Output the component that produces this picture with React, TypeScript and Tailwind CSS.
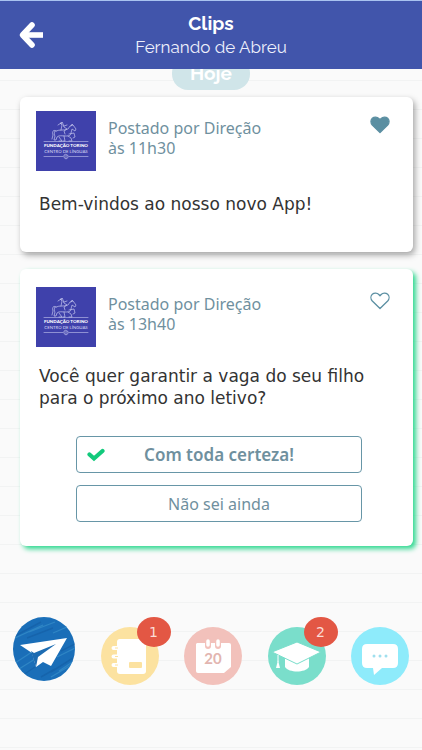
interface PostHeaderProps {
  author: string;
  time: string;
  liked: boolean;
}

interface NavItem {
  label: string;
  badge?: number;
  active?: boolean;
  icon: React.ReactNode;
}

function ArrowIcon() {
  return (
    <svg viewBox="0 0 26 28" className="h-7 w-[26px]" fill="none" stroke="currentColor" strokeWidth="5.6" aria-hidden="true">
      <path d="M14 4L4.500 14 14 24" strokeLinecap="round" strokeLinejoin="round" />
      <path d="M5 14h20" />
    </svg>
  );
}

function CheckIcon() {
  return (
    <svg viewBox="0 0 18 14" className="absolute left-[10px] top-[11px] h-[14px] w-[18px]" fill="none" stroke="#12ca7c" strokeWidth="4.200" aria-hidden="true">
      <path d="M2.500 6.500L7 10.500 15.500 3" strokeLinecap="round" strokeLinejoin="miter" />
    </svg>
  );
}

function HeartIcon({ filled }: { filled: boolean }) {
  return (
    <svg viewBox="0 0 20 18" className="h-[18px] w-5" fill={filled ? 'currentColor' : 'none'} stroke="currentColor" strokeWidth="1.300" strokeLinejoin="round" aria-hidden="true">
      <path d="M10 16.500L2.300 9C0.500 7 0.500 4 2.300 2.300 4.200 0.700 7.200 0.800 8.800 2.500L10 3.800 11.200 2.500C12.800 0.800 15.800 0.700 17.700 2.300 19.500 4 19.500 7 17.700 9z" />
    </svg>
  );
}

function SchoolLogo() {
  return (
    <svg viewBox="0 0 60 60" className="h-[60px] w-[60px] shrink-0" role="img" aria-label="Fundação Torino">
      <rect width="60" height="60" fill="#3f41ab" />
      <g fill="none" stroke="#c4c6ee" strokeWidth="0.7" strokeLinecap="round" strokeLinejoin="round">
        <path d="M20 20c-3-2-4 1-3 4l-1 4M20 20c4-2 8 0 12-2l2-3 3-1 3 4-1 2-3-2-1 4c0 3-3 3-5 3-4 0-7-1-9 1l-1 3h-2l1-4c-1-1-1-3 0-5" />
        <path d="M33 23l5-1 1 4-2 1M32 25l3 2 1 3h-3M28 25l1 5h-2M23 26l3 4h-3" />
        <path d="M25 19l1-5-2-2 3 1 1 3 3 2-3 2 1 3M25 12l1-1 1 1M22 14l3-2M28 15l3-1M35 15l1-2 1 1" />
        <path d="M8 30.500h44M8 45.500h19M33 45.500h19" strokeWidth="0.6" />
        <path d="M30 43.500l2 1v2l-2 1.500-2-1.500v-2zM30 44.500v2" />
      </g>
      <text x="30" y="36" textAnchor="middle" fontFamily="Lato, sans-serif" fontSize="4.500" fontWeight="900" fill="#ffffff">
        FUNDAÇÃO TORINO
      </text>
      <text x="30" y="42" textAnchor="middle" fontFamily="Lato, sans-serif" fontSize="4.300" fill="#dcdcf6">
        CENTRO DE LÍNGUAS
      </text>
    </svg>
  );
}

function PostHeader({ author, time, liked }: PostHeaderProps) {
  return (
    <div className="flex items-start">
      <SchoolLogo />
      <p className="ml-3 mt-[7px] flex-1 font-['Trebuchet_MS','Noto_Sans',sans-serif] text-[16px] leading-5 text-[#6f909e]">
        Postado por {author}
        <br />
        às {time}
      </p>
      <button aria-label="Curtir" aria-pressed={liked} className="mr-[7px] mt-[5px] text-[#5b8fa2]">
        <HeartIcon filled={liked} />
      </button>
    </div>
  );
}

const NAV_ITEMS: NavItem[] = [
  {
    label: 'Clips',
    active: true,
    icon: (
      <svg viewBox="0 0 62 64" className="h-16 w-[62px]">
        <defs>
          <clipPath id="clips-circle">
            <ellipse cx="31" cy="32" rx="31" ry="32" />
          </clipPath>
        </defs>
        <g clipPath="url(#clips-circle)">
          <rect width="62" height="64" fill="#1b70b9" />
          <g stroke="#4ba0d3" strokeWidth="1.200" opacity="0.45">
            <path d="M0 22L30 8M16 15l26-10M2 46l20-13M6 52l16-10M38 60l22-13M40 16l14-6M46 54l15-10M44 40l18-9" />
          </g>
          <g stroke="#125a9f" strokeWidth="1.500" opacity="0.5">
            <path d="M2 19L28 5M14 21l26-10M38 55l22-14M10 58l12-8M28 60l14-8M48 34l14-7" />
          </g>
        </g>
        <path d="M7 28L54 21 38 49 30 45 23 50 19 36z" fill="#fff" />
        <path d="M18 34l3 2 22-9-18 13-2 10z" fill="#1d6cb2" />
      </svg>
    ),
  },
  {
    label: 'Agenda',
    badge: 1,
    icon: (
      <svg viewBox="0 0 58 58" className="h-[58px] w-[58px]">
        <circle cx="29" cy="29" r="29" fill="#fce2a0" />
        <rect x="16" y="12" width="29" height="35" rx="3" fill="#fff" />
        <path d="M12.500 21h7M12.500 29.500h7M12.500 38h7" stroke="#fff" strokeWidth="4" strokeLinecap="round" />
        <path d="M14 21h3M14 29.500h3M14 38h3" stroke="#fce2a0" strokeWidth="1" />
        <rect x="28" y="35" width="13" height="6" rx="1" fill="#fce2a0" />
      </svg>
    ),
  },
  {
    label: 'Calendário',
    icon: (
      <svg viewBox="0 0 58 58" className="h-[58px] w-[58px]">
        <circle cx="29" cy="29" r="29" fill="#f2c1bb" />
        <path d="M13 16h32q2 0 2 2v22l-7 6H14q-2 0-2-2V17z" fill="#fff" />
        <path d="M24 14v5M34 14v5" stroke="#f2c1bb" strokeWidth="6" strokeLinecap="round" />
        <path d="M24 14v4M34 14v4" stroke="#fff" strokeWidth="3.500" strokeLinecap="round" />
        <text x="29" y="37" textAnchor="middle" fontFamily="Lato, sans-serif" fontSize="15" fontWeight="700" fill="#e2b5b0">
          20
        </text>
      </svg>
    ),
  },
  {
    label: 'Notas',
    badge: 2,
    icon: (
      <svg viewBox="0 0 58 58" className="h-[58px] w-[58px]">
        <circle cx="29" cy="29" r="29" fill="#7adecb" />
        <path d="M17 30v10c4 6 20 6 24 0V30z" fill="#fff" />
        <path d="M4 25l25-10 24 10-24 12z" fill="#fff" stroke="#7adecb" strokeWidth="1" />
        <path d="M10 28v7" stroke="#fff" strokeWidth="1" />
        <path d="M10 33l2 8H8z" fill="#fff" />
      </svg>
    ),
  },
  {
    label: 'Mensagens',
    icon: (
      <svg viewBox="0 0 58 58" className="h-[58px] w-[58px]">
        <circle cx="29" cy="29" r="29" fill="#8eebfb" />
        <path d="M16 17h26q5 0 5 5v14q0 5-5 5H31l-8 7-1-7h-6q-5 0-5-5V22q0-5 5-5z" fill="#fff" />
        <g fill="#9fdfee">
          <circle cx="23" cy="29" r="1.500" />
          <circle cx="29" cy="29" r="1.500" />
          <circle cx="35" cy="29" r="1.500" />
        </g>
      </svg>
    ),
  },
];

export default function App() {
  return (
    <div className="flex min-h-screen flex-col bg-[#fafafa] bg-[repeating-linear-gradient(to_bottom,transparent_0px,transparent_22px,#f2f3f3_22px,#f2f3f3_23px,transparent_23px,transparent_29px)] font-['Verdana','DejaVu_Sans',sans-serif]">
      <header className="z-10 grid h-[69px] grid-cols-[64px_1fr_64px] items-center border-t border-[#a9c3f0] bg-[#4155ab] text-white">
        <button aria-label="Voltar" className="ml-[18px] w-fit">
          <ArrowIcon />
        </button>
        <div className="text-center font-['Raleway','Lato',sans-serif]">
          <h1 className="text-[19px] font-bold leading-6">Clips</h1>
          <p className="text-[17px] leading-6 text-[#eef0fb]">Fernando de Abreu</p>
        </div>
      </header>

      <main className="flex flex-1 flex-col pl-5 pr-[9px]">
        <div className="-mt-3 ml-[152px] flex h-[33px] w-[78px] items-center justify-center rounded-2xl bg-[#d0e5e9] font-['Raleway','Lato',sans-serif] text-[19px] font-bold text-white">
          Hoje
        </div>

        <article className="mt-[7px] rounded-md bg-white px-4 pb-[37px] pt-[14px] shadow-[2px_3px_6px_rgba(0,0,0,0.35)]">
          <PostHeader author="Direção" time="11h30" liked />
          <p className="ml-[3px] mt-[22px] text-[17px] leading-[22px] text-[#333]">Bem-vindos ao nosso novo App!</p>
        </article>

        <article className="mt-[17px] rounded-md bg-white px-4 pb-6 pt-[18px] shadow-[3px_3px_5px_#2fd890]">
          <PostHeader author="Direção" time="13h40" liked={false} />
          <p className="ml-[3px] mt-[18px] text-[17px] leading-[22px] text-[#333]">
            Você quer garantir a vaga do seu filho para o próximo ano letivo?
          </p>
          <div className="ml-10 mr-[35px] mt-[27px] flex flex-col gap-3 font-['Trebuchet_MS','Noto_Sans',sans-serif] text-[16px] text-[#6f909e]">
            <button aria-pressed="true" className="relative h-[37px] rounded border border-[#6796a7] text-[17px] font-semibold">
              <CheckIcon />
              Com toda certeza!
            </button>
            <button aria-pressed="false" className="h-[37px] rounded border border-[#6796a7]">
              Não sei ainda
            </button>
          </div>
        </article>
      </main>

      <nav className="flex items-end justify-between px-[13px] pb-[65px]">
        {NAV_ITEMS.map((item) => (
          <button
            key={item.label}
            aria-label={item.label}
            aria-current={item.active ? 'page' : undefined}
            className={item.active ? 'mb-1' : 'relative'}
          >
            {item.icon}
            {item.badge && (
              <span className="absolute -right-3 -top-[10px] flex h-[30px] w-[34px] items-center justify-center rounded-[50%] bg-[#e35744] text-[14px] text-[#fbdcd6]">
                {item.badge}
              </span>
            )}
          </button>
        ))}
      </nav>
    </div>
  );
}
